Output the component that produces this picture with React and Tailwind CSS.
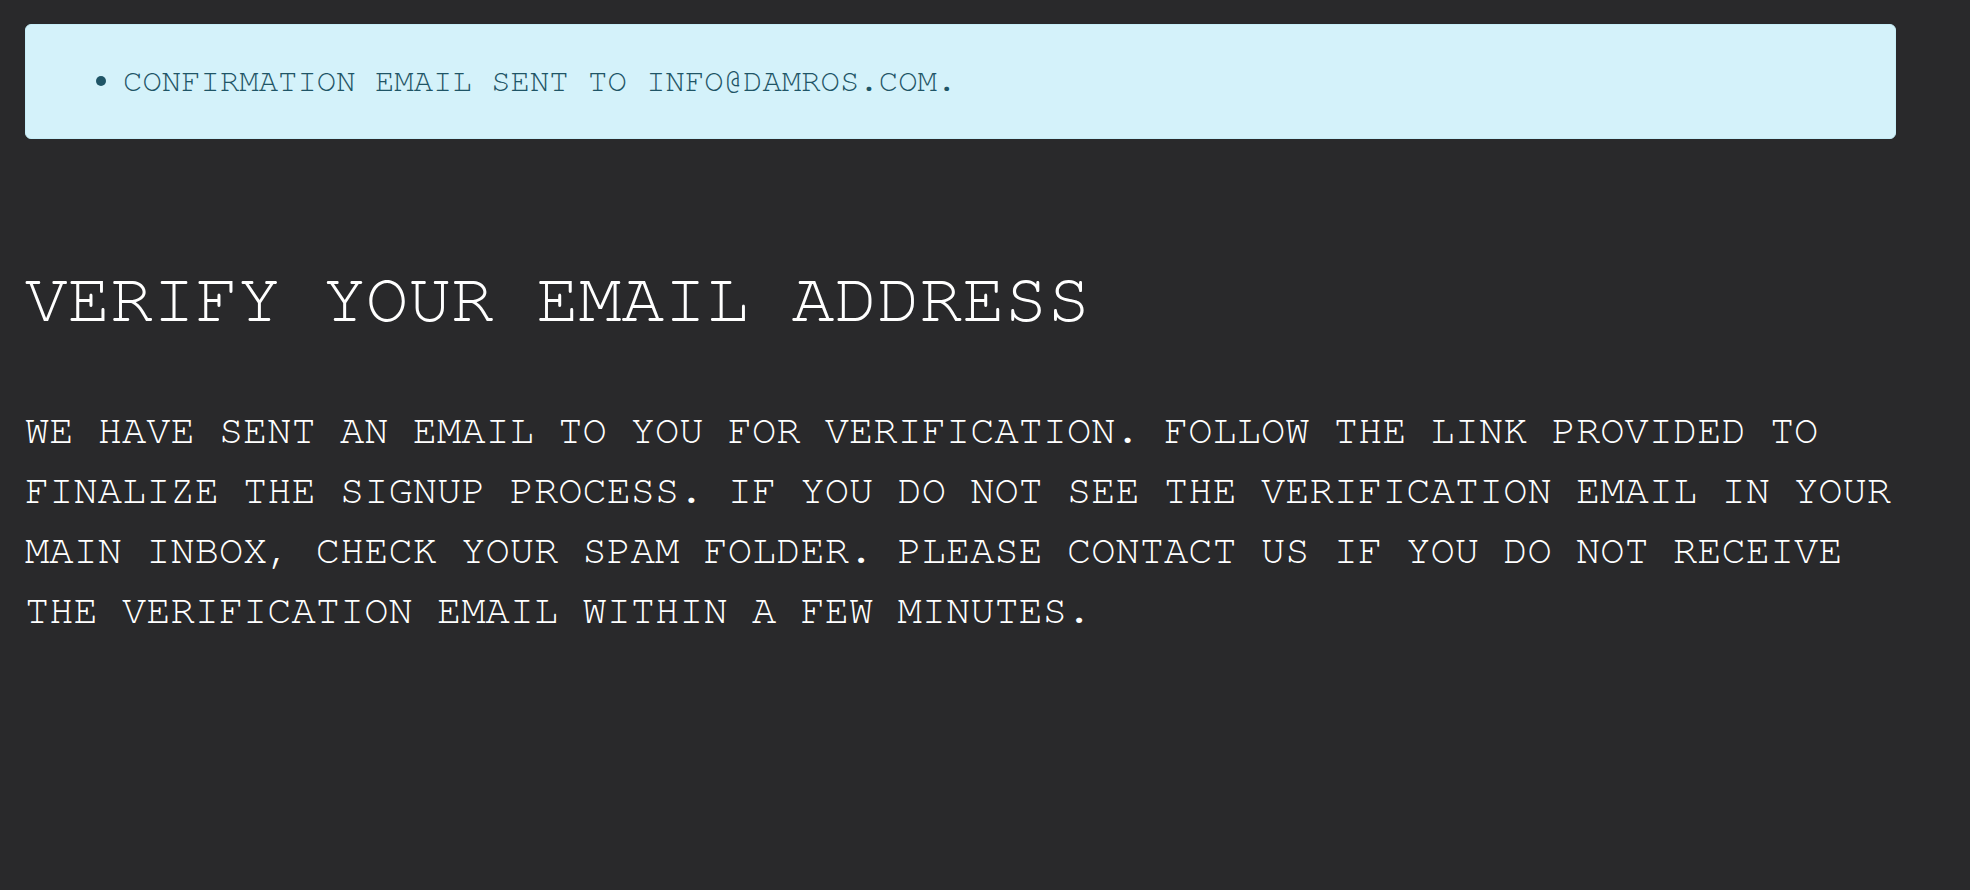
const mono = { fontFamily: '"TeX Gyre Cursor", FreeMono, "Liberation Mono", monospace' }

export default function App() {
  return (
    <div className="min-h-[890px] bg-[#29292b] pl-[25px] pr-[74px] pt-[24px] uppercase" style={mono}>
      <div className="rounded-[6px] border border-[#c6eef8] bg-[#d4f2fa] pt-[31px] pb-[34px] pl-[73px]">
        <ul className="list-disc pl-[24px] text-[32.3px] leading-[48px] text-[#1f5566] marker:text-[#1f5566]">
          <li>Confirmation email sent to info@damros.com.</li>
        </ul>
      </div>

      <h1 className="mt-[114px] text-[71px] leading-[86px] font-normal text-white">Verify your email address</h1>

      <p className="mt-[60px] text-[40.4px] leading-[60px] text-white">
        We have sent an email to you for verification. Follow the link provided to finalize the signup process. If
        you do not see the verification email in your main inbox, check your spam folder. Please contact us if you do
        not receive the verification email within a few minutes.
      </p>
    </div>
  )
}
